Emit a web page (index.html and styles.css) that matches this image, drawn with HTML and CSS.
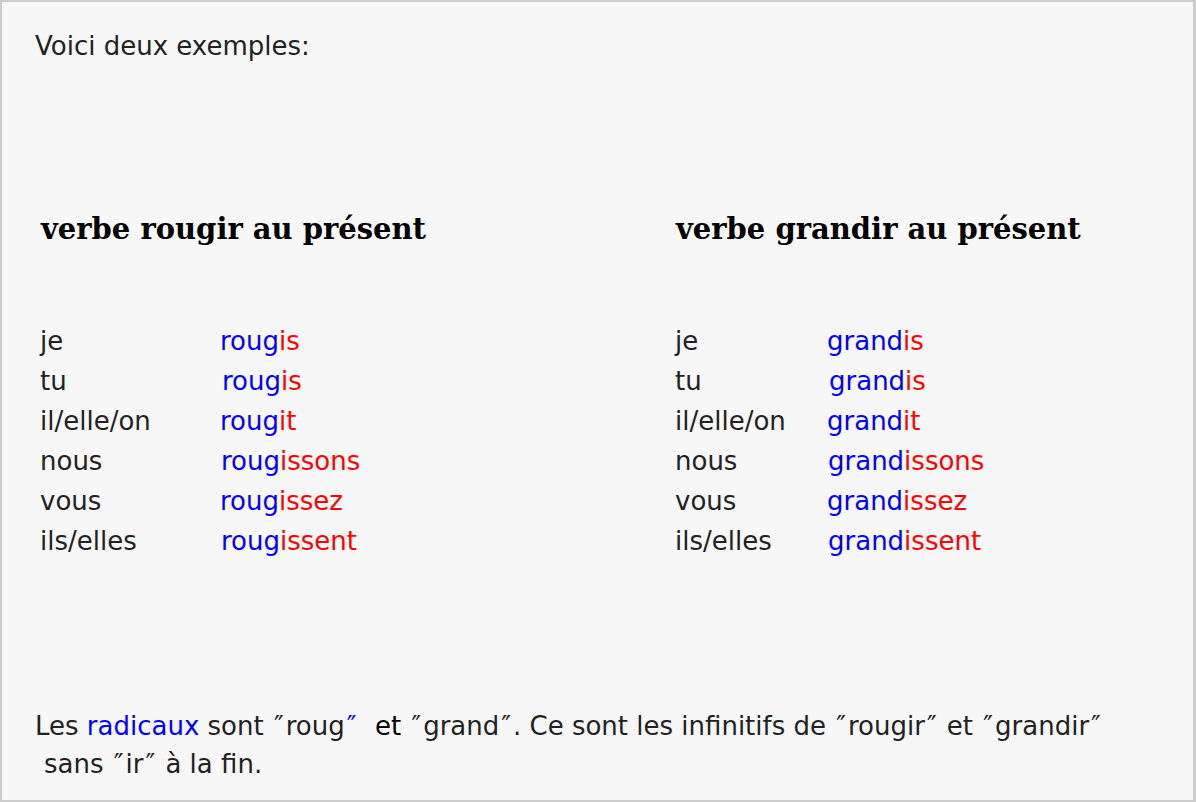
FILE: index.html
```html
<!DOCTYPE html>
<html lang="fr">
<head>
<meta charset="utf-8">
<link rel="stylesheet" href="styles.css">
</head>
<body>
<div class="page">
  <p class="intro">Voici deux exemples:</p>
  <div class="examples">
    <section class="example">
      <h3 class="title">verbe rougir au présent</h3>
      <div class="conj conj-left">
        <span class="pro">je</span><span class="verb"><b class="rad">roug</b><b class="end">is</b></span>
        <span class="pro">tu</span><span class="verb nudge"><b class="rad">roug</b><b class="end">is</b></span>
        <span class="pro">il/elle/on</span><span class="verb"><b class="rad">roug</b><b class="end">it</b></span>
        <span class="pro">nous</span><span class="verb nudge1"><b class="rad">roug</b><b class="end">issons</b></span>
        <span class="pro">vous</span><span class="verb"><b class="rad">roug</b><b class="end">issez</b></span>
        <span class="pro">ils/elles</span><span class="verb nudge1"><b class="rad">roug</b><b class="end">issent</b></span>
      </div>
    </section>
    <section class="example">
      <h3 class="title">verbe grandir au présent</h3>
      <div class="conj conj-right">
        <span class="pro">je</span><span class="verb"><b class="rad">grand</b><b class="end">is</b></span>
        <span class="pro">tu</span><span class="verb nudge"><b class="rad">grand</b><b class="end">is</b></span>
        <span class="pro">il/elle/on</span><span class="verb"><b class="rad">grand</b><b class="end">it</b></span>
        <span class="pro">nous</span><span class="verb nudge1"><b class="rad">grand</b><b class="end">issons</b></span>
        <span class="pro">vous</span><span class="verb"><b class="rad">grand</b><b class="end">issez</b></span>
        <span class="pro">ils/elles</span><span class="verb nudge1"><b class="rad">grand</b><b class="end">issent</b></span>
      </div>
    </section>
  </div>
  <p class="outro">Les <span class="blue">radicaux</span> sont <span class="q">″</span>roug<span class="q blue">″</span>&nbsp; <span class="black">et</span> <span class="q">″</span>grand<span class="q">″</span>. Ce sont les infinitifs de <span class="q">″</span>rougir<span class="q">″</span> et <span class="q">″</span>grandir<span class="q">″</span><br><span class="indent">sans <span class="q">″</span>ir<span class="q">″</span> à la fin.</span></p>
</div>
</body>
</html>
```
FILE: styles.css
```css
html, body {
  margin: 0;
  padding: 0;
}
body {
  width: 1196px;
  height: 802px;
  overflow: hidden;
  background: #f7f7f7;
}
.page {
  box-sizing: border-box;
  width: 1196px;
  height: 802px;
  border: 2px solid #cccccc;
  border-right-width: 3px;
  background: #f7f7f7;
  font-family: "DejaVu Sans", Verdana, sans-serif;
  font-size: 26px;
  color: #222222;
  padding: 0 0 0 33px;
}
.intro {
  margin: 29px 0 0 0;
  line-height: 30px;
}
.examples {
  display: grid;
  grid-template-columns: 635px 1fr;
  margin-top: 151px;
  padding-left: 5px;
}
.title {
  margin: 0;
  font-family: "DejaVu Serif", Georgia, serif;
  font-weight: bold;
  font-size: 29px;
  line-height: 34px;
  color: #000000;
  padding-left: 1px;
}
.conj {
  display: grid;
  margin-top: 75px;
  row-gap: 0;
}
.conj-left {
  grid-template-columns: 180px auto;
}
.conj-right {
  grid-template-columns: 152px auto;
}
.pro, .verb {
  line-height: 40px;
  height: 40px;
  white-space: nowrap;
}
.verb b {
  font-weight: normal;
}
.rad { color: #0000ff; }
.end { color: #ff0000; }
.nudge { padding-left: 2px; }
.nudge1 { padding-left: 1px; }
.outro {
  margin: 146px 0 0 0;
  line-height: 38px;
  white-space: nowrap;
}
.q {
  padding: 0 2px;
}
.blue { color: #0000ff; }
.black { color: #000000; }
.indent { padding-left: 9px; }
```
